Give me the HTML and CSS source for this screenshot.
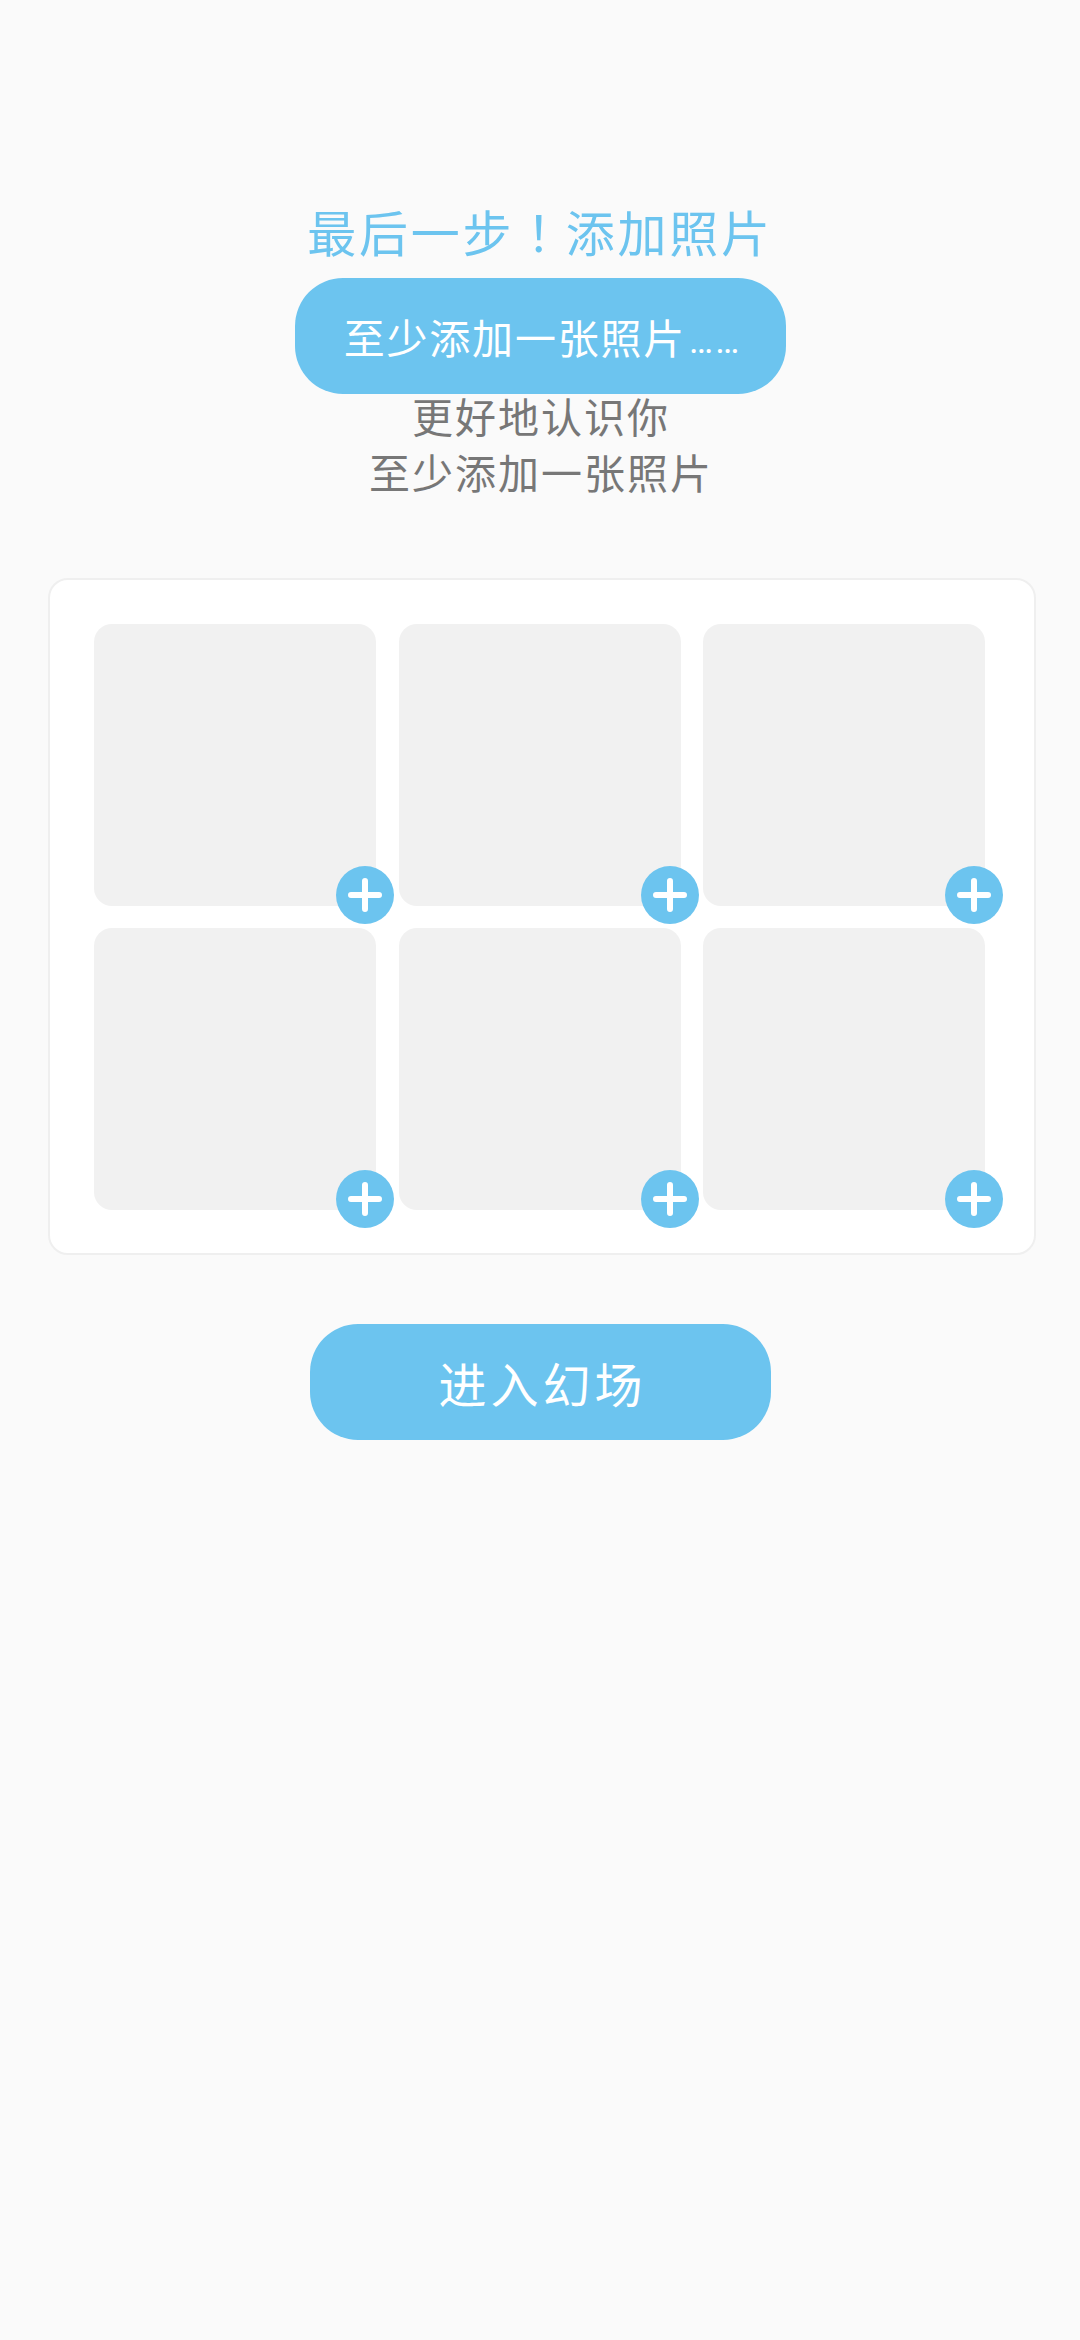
FILE: index.html
```html
<!DOCTYPE html>
<html lang="zh-CN">
<head>
    <meta charset="UTF-8">
    <meta name="viewport" content="width=device-width, initial-scale=1.0">
    <title>添加照片</title>
    <link rel="stylesheet" href="styles.css">
</head>
<body>
    <div class="intro">
        <h1 class="title">最后一步<span class="bang" lang="zh-TW">！</span>添加照片</h1>
        <div class="hintPill">至少添加一张照片<span class="dots">……</span></div>
        <div class="subtitles">
            <p class="subtitle">更好地认识你</p>
            <p class="subtitle">至少添加一张照片</p>
        </div>
    </div>

    <div class="photoCard">
        <div class="photoGrid">
            <div class="photoSlot">
                <span class="addBtn"><svg viewBox="0 0 34 34"><path d="M3 17H31M17 3V31"/></svg></span>
            </div>
            <div class="photoSlot">
                <span class="addBtn"><svg viewBox="0 0 34 34"><path d="M3 17H31M17 3V31"/></svg></span>
            </div>
            <div class="photoSlot">
                <span class="addBtn"><svg viewBox="0 0 34 34"><path d="M3 17H31M17 3V31"/></svg></span>
            </div>
            <div class="photoSlot">
                <span class="addBtn"><svg viewBox="0 0 34 34"><path d="M3 17H31M17 3V31"/></svg></span>
            </div>
            <div class="photoSlot">
                <span class="addBtn"><svg viewBox="0 0 34 34"><path d="M3 17H31M17 3V31"/></svg></span>
            </div>
            <div class="photoSlot">
                <span class="addBtn"><svg viewBox="0 0 34 34"><path d="M3 17H31M17 3V31"/></svg></span>
            </div>
        </div>
    </div>

    <div class="enterRow">
        <button class="enterBtn">进入幻场</button>
    </div>
</body>
</html>
```

FILE: styles.css
```css
body {
    margin: 0;
    height: 2340px;
    background: #fafafa;
    font-family: "Noto Sans CJK SC", "Noto Sans", sans-serif;
    overflow: hidden;
}
.intro {
    padding-top: 197px;
    display: flex;
    flex-direction: column;
    align-items: center;
}
.title {
    margin: 0;
    font-size: 49px;
    font-weight: 400;
    line-height: 68px;
    letter-spacing: 2.7px;
    color: #6cc4ef;
}
.bang {
    font-family: "Noto Sans CJK TC", sans-serif;
}
.hintPill {
    box-sizing: border-box;
    width: 491px;
    height: 116px;
    margin-top: 13px;
    padding-left: 5px;
    border-radius: 48px;
    background: #6cc4ef;
    color: #fff;
    font-size: 41px;
    letter-spacing: 1.8px;
    display: flex;
    align-items: center;
    justify-content: center;
}
.dots {
    margin-left: 3px;
    padding-top: 10px;
    font-family: "Roboto", sans-serif;
    font-size: 36px;
    letter-spacing: 2px;
}
.subtitles {
    margin-top: -7px;
    padding-left: 2px;
}
.subtitle {
    margin: 0;
    font-size: 41px;
    line-height: 56px;
    letter-spacing: 2px;
    color: #777;
    text-align: center;
}
.photoCard {
    box-sizing: border-box;
    width: 988px;
    height: 677px;
    margin: 79px 0 0 48px;
    padding: 44px;
    background: #fff;
    border: 2px solid #efefef;
    border-radius: 20px;
}
.photoGrid {
    display: grid;
    grid-template-columns: repeat(3, 282px);
    grid-auto-rows: 282px;
    column-gap: 22.5px;
    row-gap: 22px;
}
.photoSlot {
    position: relative;
    background: #f1f1f1;
    border-radius: 18px;
}
.addBtn {
    position: absolute;
    right: -18px;
    bottom: -18px;
    width: 58px;
    height: 58px;
    border-radius: 50%;
    background: #6cc4ef;
    display: flex;
    align-items: center;
    justify-content: center;
}
.addBtn svg {
    width: 34px;
    height: 34px;
}
.addBtn path {
    fill: none;
    stroke: #fff;
    stroke-width: 6;
    stroke-linecap: round;
}
.enterRow {
    display: flex;
    padding: 69px 0 0 310px;
}
.enterBtn {
    width: 461px;
    height: 116px;
    padding: 0 0 0 4px;
    border: none;
    border-radius: 48px;
    background: #6cc4ef;
    color: #fff;
    font-family: inherit;
    font-size: 48px;
    letter-spacing: 4px;
}
```
